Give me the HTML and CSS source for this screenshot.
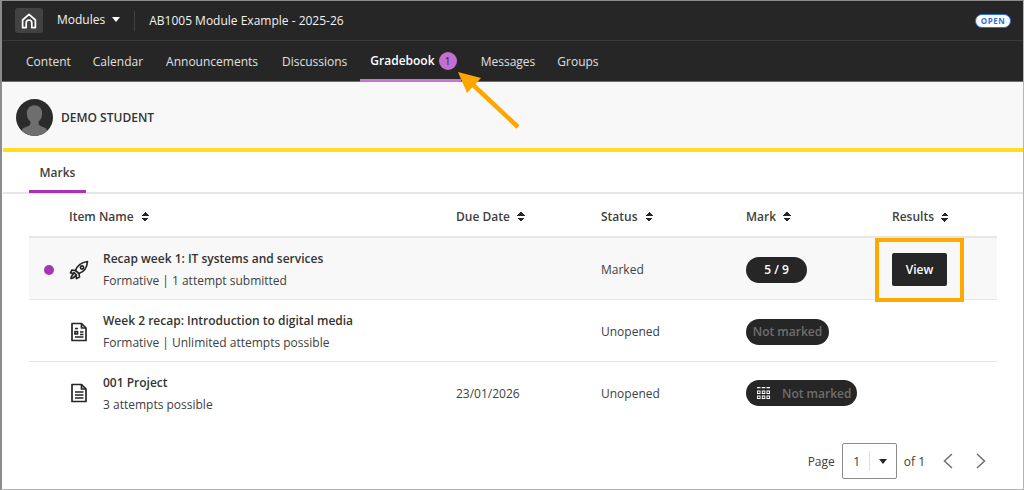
FILE: index.html
```html
<!DOCTYPE html>
<html lang="en">
<head>
  <meta charset="UTF-8">
  <meta name="viewport" content="width=device-width, initial-scale=1.0">
  <title>Gradebook</title>
  <link rel="stylesheet" href="styles.css">
</head>
<body>
  <div class="frame">
    <header class="top-bar">
      <div class="home-btn">
        <svg width="16" height="16" viewBox="0 0 16 16" fill="none" stroke="#fff" stroke-width="1.7" stroke-linejoin="round"><path d="M1.6 7 8 1.4 14.4 7v7.6h-3.6V9.800a2.800 2.800 0 0 0-5.600 0v4.800H1.600z"/></svg>
      </div>
      <div class="modules">Modules <span class="caret"></span></div>
      <div class="top-sep"></div>
      <div class="course-title">AB1005 Module Example - 2025-26</div>
      <div class="open-badge">OPEN</div>
    </header>
    <nav class="nav-bar">
      <a class="nav-link">Content</a>
      <a class="nav-link">Calendar</a>
      <a class="nav-link nav-announce">Announcements</a>
      <a class="nav-link nav-discuss">Discussions</a>
      <a class="nav-link nav-active">Gradebook <span class="nav-count">1</span></a>
      <a class="nav-link nav-messages">Messages</a>
      <a class="nav-link">Groups</a>
    </nav>
    <div class="student-band">
      <div class="avatar">
        <svg width="37" height="37" viewBox="0 0 36 36"><circle cx="18" cy="18" r="18" fill="#2b2b2b"/><path d="M18 6c5 0 7.500 3.600 7.500 8 0 3.500-1.700 6.500-3.500 8v2c0 1.500 3 2.700 6 4 1.500.7 2 1.600 2.500 2.700A18 18 0 0 1 18 36a18 18 0 0 1-12.500-5.300c.5-1.100 1-2 2.500-2.700 3-1.300 6-2.500 6-4v-2c-1.800-1.500-3.500-4.500-3.500-8 0-4.400 2.500-8 7.500-8z" fill="#6e6e6e"/></svg>
      </div>
      <div class="student-name">DEMO STUDENT</div>
    </div>
    <div class="tabs">
      <div class="tab">Marks</div>
    </div>
    <div class="grade-table">
      <div class="grade-row head-row">
        <div class="head-name">Item Name <span class="sort"></span></div>
        <div>Due Date <span class="sort"></span></div>
        <div>Status <span class="sort"></span></div>
        <div>Mark <span class="sort"></span></div>
        <div>Results <span class="sort"></span></div>
      </div>
      <div class="grade-row item-row row-new">
        <div class="cell-name">
          <span class="new-dot"></span>
          <svg class="item-icon" width="20" height="20" viewBox="0 0 20 20" fill="none" stroke="#262626" stroke-width="1.700" stroke-linejoin="round" stroke-linecap="round"><path d="M6.500 10.500C8 6 12.500 2.500 18.500 1.500 18 7.500 14.500 12 10 13.500z"/><path d="M6.500 10.500 3 10l-1.500 3 3.300.5M10 13.500l.5 3.500-3 1.500-.5-3.300"/><path d="M5 12.500 7.500 15 4 18l-2 .5.500-2z"/><circle cx="13" cy="7.500" r="1.600"/></svg>
          <div class="item-text">
            <div class="item-title">Recap week 1: IT systems and services</div>
            <div class="item-sub">Formative | 1 attempt submitted</div>
          </div>
        </div>
        <div></div>
        <div class="cell-text">Marked</div>
        <div><span class="pill pill-score">5 / 9</span></div>
        <div><button class="view-btn">View</button></div>
      </div>
      <div class="grade-row item-row">
        <div class="cell-name">
          <svg class="item-icon" width="20" height="20" viewBox="0 0 20 20" fill="none" stroke="#262626" stroke-width="1.700" stroke-linejoin="round"><path d="M3 1.500h9.500L17 6v12.500H3z"/><path d="M12.500 1.500V6H17"/><path d="M6 6.500h3M6 9.500h2.500v2.500H6zM11 10h3.500M11 12.500h3.500M6 15h8.500"/></svg>
          <div class="item-text">
            <div class="item-title">Week 2 recap: Introduction to digital media</div>
            <div class="item-sub">Formative | Unlimited attempts possible</div>
          </div>
        </div>
        <div></div>
        <div class="cell-text">Unopened</div>
        <div><span class="pill pill-muted">Not marked</span></div>
        <div></div>
      </div>
      <div class="grade-row item-row row-last">
        <div class="cell-name">
          <svg class="item-icon" width="20" height="20" viewBox="0 0 20 20" fill="none" stroke="#262626" stroke-width="1.700" stroke-linejoin="round"><path d="M3 1.500h9.500L17 6v12.500H3z"/><path d="M12.500 1.500V6H17"/><path d="M6 9h8.500M6 12h8.500M6 15h8.500"/></svg>
          <div class="item-text">
            <div class="item-title">001 Project</div>
            <div class="item-sub">3 attempts possible</div>
          </div>
        </div>
        <div class="cell-text">23/01/2026</div>
        <div class="cell-text">Unopened</div>
        <div>
          <span class="pill pill-muted pill-icon">
            <svg width="15" height="14" viewBox="0 0 15 14" fill="#fff"><path d="M1 1h3.500v1.300H1zM5.800 1h3.500v1.300H5.800zM10.500 1H14v1.300h-3.500zM1 4.500h3.500V8H1zm.9.9v1.700h1.700V5.400zM5.800 4.500h3.500V8H5.800zm.9.9v1.700h1.700V5.400zM10.500 4.500H14V8h-3.500zm.9.900v1.700h1.700V5.400zM1 9.500h3.500V13H1zm.9.900v1.700h1.700v-1.700zM5.800 9.500h3.500V13H5.800zm.9.900v1.700h1.700v-1.700zM10.500 9.500H14V13h-3.500zm.9.900v1.700h1.700v-1.700z"/></svg>
            Not marked
          </span>
        </div>
        <div></div>
      </div>
    </div>
    <div class="pager">
      <span>Page</span>
      <div class="page-select">
        <span class="page-num">1</span>
        <span class="page-sep"></span>
        <span class="caret caret-dark"></span>
      </div>
      <span class="page-of">of 1</span>
      <svg class="page-arrow" width="12" height="18" viewBox="0 0 12 18" fill="none" stroke="#6e6e6e" stroke-width="1.500"><path d="M10 2 2.500 9l7.500 7"/></svg>
      <svg class="page-arrow" width="12" height="18" viewBox="0 0 12 18" fill="none" stroke="#6e6e6e" stroke-width="1.500"><path d="M2 2l7.500 7L2 16"/></svg>
    </div>

    <!-- annotations drawn on top of the screenshot -->
    <svg class="callout-arrow" width="70" height="64" viewBox="0 0 70 64"><path d="M60 57 12 12" stroke="#ffa500" stroke-width="4.500" fill="none"/><path d="M0 2 23 8 9 23z" fill="#ffa500"/></svg>
    <div class="callout-box"></div>
  </div>
</body>
</html>
```

FILE: styles.css
```css
* {
  margin: 0;
  padding: 0;
  box-sizing: border-box;
}
html, body {
  width: 100%;
  height: 100%;
  overflow: hidden;
  background: #fff;
}
body {
  font-family: "Open Sans", "Liberation Sans", sans-serif;
  font-size: 12px;
  color: #262626;
}
.frame {
  position: relative;
  width: 1024px;
  height: 490px;
  border: 1px solid #8c8c8c;
  border-left-width: 2px;
  border-right-color: #b5b5b5;
  border-bottom-color: #b5b5b5;
}
/* top bar */
.top-bar {
  display: flex;
  align-items: center;
  height: 40px;
  background: #262626;
  border-bottom: 1px solid #3a3a3a;
  color: #f2f2f2;
  padding-left: 13px;
}
.home-btn {
  width: 28px;
  height: 25px;
  background: #424242;
  border-radius: 3px;
  display: flex;
  align-items: center;
  justify-content: center;
}
.modules {
  margin-left: 14px;
  padding-bottom: 2px;
  display: flex;
  align-items: center;
}
.caret {
  display: inline-block;
  width: 0;
  height: 0;
  border-left: 4px solid transparent;
  border-right: 4px solid transparent;
  border-top: 5px solid #fff;
  margin-left: 7px;
}
.caret-dark {
  border-top-color: #262626;
  margin-left: 0;
}
.top-sep {
  width: 1px;
  height: 20px;
  background: #404040;
  margin: 0 14px;
}
.course-title {
  flex: 1;
}
.open-badge {
  background: #fff;
  border: 1.500px solid #2f6fe0;
  color: #2f6fe0;
  font-size: 8px;
  font-weight: 700;
  letter-spacing: .5px;
  line-height: 11px;
  height: 14px;
  width: 36px;
  text-align: center;
  border-radius: 7px;
  margin-right: 12px;
}
/* course nav */
.nav-bar {
  display: flex;
  height: 41px;
  background: #262626;
  border-bottom: 1px solid #6b6b6b;
  padding-left: 13px;
  color: #e0e0e0;
}
.nav-link {
  display: flex;
  align-items: center;
  padding: 0 11px;
}
.nav-announce {
  margin-left: 1px;
}
.nav-discuss {
  margin-left: 2px;
}
.nav-active {
  color: #fff;
  font-weight: 600;
  border-bottom: 3px solid #c774d4;
  height: 41px;
  padding: 1px 4px 0 10px;
  margin-left: 2px;
  white-space: pre;
}
.nav-messages {
  margin-left: 9px;
}
.nav-count {
  display: inline-flex;
  width: 18px;
  height: 18px;
  margin-left: 1px;
  align-items: center;
  justify-content: center;
  background: #c36fd1;
  color: #262626;
  font-size: 10px;
  font-weight: 400;
  border-radius: 50%;
}
/* student band */
.student-band {
  display: flex;
  align-items: center;
  height: 66px;
  background: #f8f8f8;
  padding: 4px 0 0 14px;
}
.student-name {
  margin: 1px 0 0 8px;
  font-weight: 600;
  color: #333;
}
.avatar {
  height: 37px;
}
.tabs {
  height: 46px;
  margin-left: 1px;
  border-top: 4px solid #ffdd22;
  border-bottom: 2px solid #e6e6e6;
  padding-left: 26px;
}
.tab {
  display: flex;
  align-items: center;
  justify-content: center;
  width: 57px;
  height: 41px;
  padding-top: 2px;
  font-weight: 600;
  color: #404040;
  border-bottom: 3px solid #a832b8;
}
/* gradebook table */
.grade-table {
  margin-left: 27px;
  width: 968px;
}
.grade-row {
  display: grid;
  grid-template-columns: 427px 145px 145px 146px 105px;
  align-items: center;
}
.head-row {
  height: 44px;
  padding-top: 2px;
  border-bottom: 2px solid #e6e6e6;
  font-weight: 600;
  color: #404040;
}
.head-name {
  padding-left: 40px;
}
.sort {
  display: inline-block;
  width: 8px;
  height: 10px;
  margin-left: 4px;
  vertical-align: -1px;
  background:
    linear-gradient(to top left, #262626 50%, transparent 50%) left top / 4px 4px no-repeat,
    linear-gradient(to top right, #262626 50%, transparent 50%) right top / 4px 4px no-repeat,
    linear-gradient(to bottom left, #262626 50%, transparent 50%) left bottom / 4px 4px no-repeat,
    linear-gradient(to bottom right, #262626 50%, transparent 50%) right bottom / 4px 4px no-repeat;
}
.item-row {
  height: 62px;
  padding-top: 2px;
  border-bottom: 1px solid #e6e6e6;
}
.row-new {
  background: #f8f8f8;
}
.row-last {
  padding-top: 0;
  border-bottom: 0;
}
.cell-name {
  position: relative;
  display: flex;
  align-items: center;
}
.new-dot {
  position: absolute;
  left: 15px;
  width: 10px;
  height: 10px;
  background: #a832b8;
  border-radius: 50%;
}
.item-icon {
  margin-left: 40px;
  flex-shrink: 0;
}
.item-text {
  margin-left: 14px;
}
.item-title {
  font-weight: 600;
  color: #333;
  line-height: 17px;
  margin-bottom: 5px;
}
.item-sub,
.cell-text {
  color: #404040;
  line-height: 17px;
}
.pill {
  display: inline-flex;
  align-items: center;
  height: 26px;
  border-radius: 13px;
  background: #262626;
  font-weight: 600;
  vertical-align: middle;
}
.pill-score {
  width: 61px;
  justify-content: center;
  color: #fff;
}
.pill-muted {
  width: 83px;
  justify-content: center;
  color: #6e6e6e;
}
.pill-icon {
  width: 111px;
  padding-left: 10px;
  justify-content: flex-start;
}
.pill-icon svg {
  margin-right: 11px;
}
.view-btn {
  width: 55px;
  height: 33px;
  background: #262626;
  border: 0;
  border-radius: 2px;
  color: #fff;
  font: 600 12px "Open Sans", sans-serif;
}
/* pager */
.pager {
  display: flex;
  align-items: center;
  justify-content: flex-end;
  margin-top: 19px;
  padding-right: 36px;
  color: #404040;
}
.page-select {
  display: flex;
  align-items: center;
  width: 55px;
  height: 36px;
  margin-left: 7px;
  border: 1px solid #8c8c8c;
  border-radius: 2px;
}
.page-num {
  width: 26px;
  text-align: center;
  padding-left: 2px;
}
.page-sep {
  width: 1px;
  height: 20px;
  background: #e0e0e0;
  margin-right: 9px;
}
.page-of {
  margin: 0 17px 0 7px;
}
.page-arrow + .page-arrow {
  margin-left: 21px;
}
/* annotations */
.callout-arrow {
  position: absolute;
  left: 456px;
  top: 69px;
}
.callout-box {
  position: absolute;
  left: 873px;
  top: 237px;
  width: 89px;
  height: 64px;
  border: 4px solid #ffa900;
}
```
